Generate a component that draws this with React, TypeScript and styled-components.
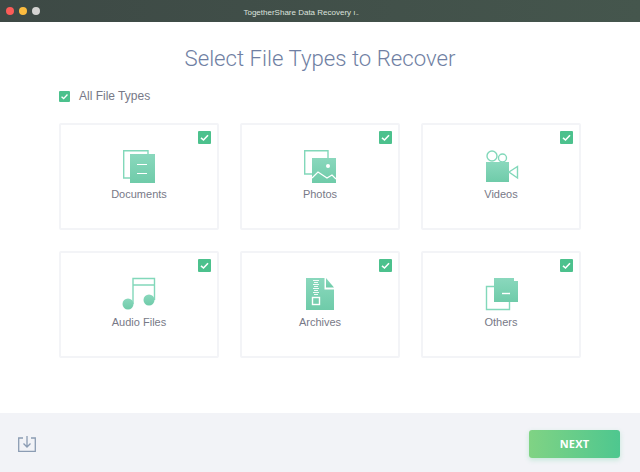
import React from "react";
import styled, { createGlobalStyle } from "styled-components";

const Global = createGlobalStyle`
  html, body { margin: 0; padding: 0; background: #fff; }
  body { font-family: "Liberation Sans", sans-serif; }
  * { box-sizing: border-box; }
`;

const Page = styled.div`
  width: 640px;
  height: 472px;
  display: flex;
  flex-direction: column;
  overflow: hidden;
  background: #fff;
`;

const TitleBar = styled.header`
  position: relative;
  height: 22px;
  flex: none;
  display: flex;
  align-items: center;
  justify-content: center;
  padding-right: 38px;
  background: linear-gradient(90deg, #3d4945 0%, #45564d 100%);
`;

const Lights = styled.div`
  position: absolute;
  left: 6px;
  top: 7px;
  display: flex;
  gap: 5px;
`;

const Light = styled.span<{ $color: string }>`
  width: 8px;
  height: 8px;
  border-radius: 50%;
  background: ${(p) => p.$color};
`;

const WindowTitle = styled.span`
  font-family: "Liberation Sans", sans-serif;
  font-size: 8px;
  color: #dde2de;
  white-space: nowrap;
`;

const Main = styled.main`
  flex: 1;
  padding: 0 59px;
`;

const Heading = styled.h1`
  margin: 21px 0 0;
  height: 30px;
  line-height: 30px;
  text-align: center;
  font-family: Roboto, sans-serif;
  font-weight: 300;
  font-size: 22.2px;
  color: #707fa3;
`;

const AllRow = styled.label`
  display: flex;
  align-items: center;
  gap: 9px;
  margin-top: 15px;
  height: 16px;
`;

const AllLabel = styled.span`
  font-size: 12px;
  color: #777987;
`;

const Box = styled.span<{ $size: number }>`
  width: ${(p) => p.$size}px;
  height: ${(p) => p.$size}px;
  flex: none;
  display: flex;
  align-items: center;
  justify-content: center;
  background: #4cc18d;
  border-radius: 1px;
`;

const Grid = styled.div`
  display: grid;
  grid-template-columns: repeat(3, 160px);
  grid-auto-rows: 107px;
  column-gap: 21px;
  row-gap: 21px;
  margin-top: 19px;
`;

const Card = styled.div`
  position: relative;
  display: flex;
  flex-direction: column;
  align-items: center;
  padding-top: 24px;
  background: #fff;
  border: 2px solid #f3f4f7;
  border-radius: 2px;
`;

const CardCheck = styled.div`
  position: absolute;
  top: 6px;
  right: 6px;
  display: flex;
`;

const IconWrap = styled.div`
  width: 36px;
  height: 36px;
  display: flex;
`;

const CardLabel = styled.span`
  margin-top: 2px;
  font-size: 11px;
  line-height: 14px;
  color: #777987;
`;

const Footer = styled.footer`
  flex: none;
  height: 59px;
  display: flex;
  align-items: center;
  justify-content: space-between;
  padding: 2px 20px 0 17px;
  background: #f2f3f7;
`;

const NextButton = styled.button`
  width: 91px;
  height: 28px;
  border: 0;
  border-radius: 3px;
  background: linear-gradient(90deg, #80d384 0%, #4ec78f 100%);
  box-shadow: 0 2px 5px rgba(90, 205, 150, 0.3);
  color: #fff;
  font-family: "Open Sans", sans-serif;
  font-weight: 700;
  font-size: 11px;
  letter-spacing: 0.2px;
`;

const Check = ({ size }: { size: number }) => (
  <Box $size={size}>
    <svg width={size} height={size} viewBox="0 0 13 13" fill="none">
      <path d="M3 6.8 5.5 9 10 4.2" stroke="#fff" strokeWidth="1.6" />
    </svg>
  </Box>
);

const STROKE = "#82d8ba";

const Svg = ({ children }: { children: React.ReactNode }) => (
  <svg width="36" height="36" viewBox="0 0 36 36" fill="none" strokeWidth="1.4">
    {children}
  </svg>
);

const Fill = "url(#mint)";

const DocIcon = () => (
  <Svg>
    <path d="M27 5V1.7H2.7V29H9" stroke={STROKE} />
    <rect x="9" y="5" width="25" height="29" fill={Fill} />
    <path d="M16 15.5H26M16 24.5H26" stroke="#fff" strokeWidth="1.1" />
  </Svg>
);

const PhotoIcon = () => (
  <Svg>
    <path d="M10 25H2.7V1.7H26V9" stroke={STROKE} />
    <rect x="10" y="9" width="24" height="25" fill={Fill} />
    <circle cx="26" cy="17" r="2" fill="#fff" />
    <path d="M10 29 16 23 25 29 30 26 34 30" stroke="#fff" strokeWidth="1.2" />
  </Svg>
);

const VideoIcon = () => (
  <Svg>
    <circle cx="9" cy="7" r="5" stroke={STROKE} />
    <circle cx="19.5" cy="9" r="4" stroke={STROKE} />
    <rect x="3" y="13" width="23" height="20" fill={Fill} />
    <path d="M26 23 34.5 17.5V29Z" stroke={STROKE} />
  </Svg>
);

const AudioIcon = () => (
  <Svg>
    <path d="M12 27V1.5H33.5V23M12 8H33.5" stroke={STROKE} />
    <circle cx="7" cy="27" r="5.5" fill={Fill} />
    <circle cx="28" cy="23" r="5.5" fill={Fill} />
  </Svg>
);

const ArchiveIcon = () => (
  <Svg>
    <path d="M4 1H22.5V12.5H32V33H4Z" fill={Fill} />
    <path d="M24 1 32 10.5H24Z" fill={Fill} />
    <path
      d="M11 3.5H17M12 5.5H16M11 7.5H17M12 9.5H16M11 11.5H17M12 13.5H16M11 15.5H17M12 17.5H16"
      stroke="#fff"
      strokeWidth="0.9"
    />
    <rect x="10.5" y="20.5" width="7" height="7" stroke="#fff" strokeWidth="1.4" />
  </Svg>
);

const OtherIcon = () => (
  <Svg>
    <path d="M11 9.5H3.5V32.5H26.5V25" stroke={STROKE} />
    <path d="M11 1H31V4H35V25H11Z" fill={Fill} />
    <path d="M19 16.5H27" stroke="#fff" strokeWidth="1.4" />
  </Svg>
);

const types = [
  { label: "Documents", Icon: DocIcon },
  { label: "Photos", Icon: PhotoIcon },
  { label: "Videos", Icon: VideoIcon },
  { label: "Audio Files", Icon: AudioIcon },
  { label: "Archives", Icon: ArchiveIcon },
  { label: "Others", Icon: OtherIcon },
];

export default function App() {
  return (
    <Page>
      <Global />
      <svg width="0" height="0" style={{ position: "absolute" }}>
        <defs>
          <linearGradient id="mint" x1="0" y1="0" x2="0" y2="1">
            <stop offset="0" stopColor="#8ad8bd" />
            <stop offset="1" stopColor="#6fcba9" />
          </linearGradient>
        </defs>
      </svg>
      <TitleBar>
        <Lights>
          <Light $color="#fb5c58" />
          <Light $color="#fcbc3f" />
          <Light $color="#d4d4d2" />
        </Lights>
        <WindowTitle>TogetherShare Data Recovery ı₋</WindowTitle>
      </TitleBar>
      <Main>
        <Heading>Select File Types to Recover</Heading>
        <AllRow>
          <Check size={11} />
          <AllLabel>All File Types</AllLabel>
        </AllRow>
        <Grid>
          {types.map(({ label, Icon }) => (
            <Card key={label}>
              <CardCheck>
                <Check size={13} />
              </CardCheck>
              <IconWrap>
                <Icon />
              </IconWrap>
              <CardLabel>{label}</CardLabel>
            </Card>
          ))}
        </Grid>
      </Main>
      <Footer>
        <svg width="20" height="18" viewBox="0 0 20 18" fill="none" stroke="#8b9cb3" strokeWidth="1.3">
          <path d="M6 3H1.7V16.3H18.3V3H14" />
          <path d="M10 1V11.5M6.5 8.5 10 12 13.5 8.5" />
        </svg>
        <NextButton>NEXT</NextButton>
      </Footer>
    </Page>
  );
}
